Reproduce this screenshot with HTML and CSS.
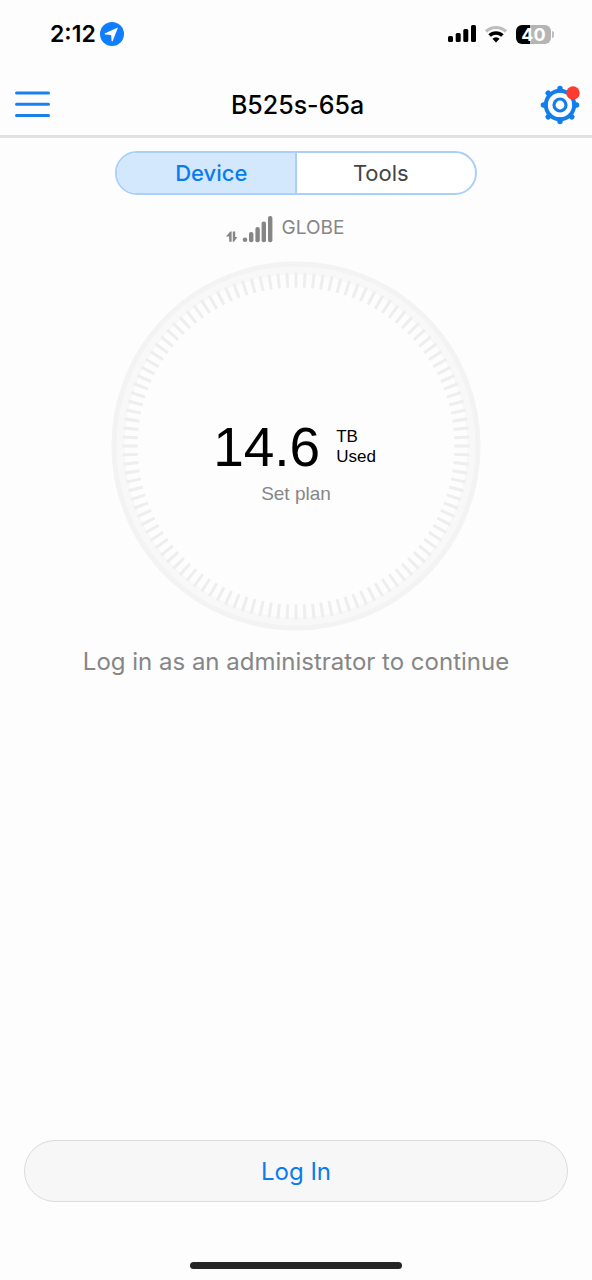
FILE: index.html
```html
<!DOCTYPE html>
<html lang="en">
<head>
<meta charset="utf-8">
<meta name="viewport" content="width=device-width, initial-scale=1">
<title>B525s-65a</title>
<link rel="stylesheet" href="styles.css">
</head>
<body>
<div class="statusbar">
  <div class="clock">
    <span>2:12</span>
    <svg width="24" height="24" viewBox="0 0 24 24" aria-hidden="true"><circle cx="12" cy="12" r="12" fill="#0f7dff"/><path d="M18 5.4 5 11.2q-.9.6.1 1.2l6 .5.5 6q.5 1 1.1.1Z" fill="#fff"/></svg>
  </div>
  <div class="indicators">
    <svg width="28" height="18" viewBox="0 0 28 18" aria-hidden="true"><rect x="0" y="11" width="5" height="6" rx="1.5"/><rect x="7.7" y="8" width="5" height="9" rx="1.5"/><rect x="15.3" y="4" width="5" height="13" rx="1.5"/><rect x="23" y="0" width="5" height="17" rx="1.5"/></svg>
    <svg width="24" height="18" viewBox="0 0 24 18" fill="none" aria-hidden="true"><path d="M2 6.5a14.5 14.5 0 0 1 20 0" stroke="#bdbdbd" stroke-width="3.2"/><path d="M5.6 10.6a9 9 0 0 1 12.8 0" stroke="#000" stroke-width="3.6"/><path d="M8.4 13.8a5 5 0 0 1 7.2 0L12 17.4Z" fill="#000"/></svg>
    <div class="battery"><span class="level">40</span><span class="nub"></span></div>
  </div>
</div>
<header class="header">
  <button class="icon-button" aria-label="Menu">
    <svg width="35" height="27" viewBox="0 0 35 27" stroke="#1a80ee" stroke-width="3" stroke-linecap="round" aria-hidden="true"><path d="M1.5 2h32M1.5 13.3h32M1.5 24.5h32"/></svg>
  </button>
  <h1 class="title">B525s-65a</h1>
  <button class="icon-button" aria-label="Settings">
    <svg width="40" height="40" viewBox="0 0 40 40" fill="none" aria-hidden="true">
      <g stroke="#147dec" stroke-linecap="round">
        <circle cx="20" cy="20" r="14.2" stroke-width="4"/><circle cx="20" cy="20" r="6" stroke-width="3.2"/>
        <path stroke-width="5.4" d="M20 5V3.4M20 35v1.6M5 20H3.4M35 20h1.6M9.4 9.4 8.2 8.2M30.6 30.6l1.2 1.2M9.4 30.6l-1.2 1.2M30.6 9.4l1.2-1.2"/>
      </g>
      <circle cx="33" cy="8" r="6.7" fill="#ff3b2f"/>
    </svg>
  </button>
</header>
<main class="main">
  <div class="tabs">
    <button class="tab tab-active" aria-pressed="true">Device</button>
    <button class="tab" aria-pressed="false">Tools</button>
  </div>
  <div class="network">
    <svg width="47" height="28" viewBox="0 0 47 28" fill="#868686" aria-hidden="true">
      <path d="M0 20.4 4.2 15.6h1.4v10.2H3.2v-5.4ZM6.8 15.6h2.4v5.4h2.2L8 25.8H6.8Z"/>
      <circle cx="19" cy="23.8" r="2.3"/><rect x="23" y="16" width="4.4" height="10.2" rx="2"/><rect x="29.4" y="11" width="4.4" height="15.2" rx="2"/><rect x="35.6" y="5.5" width="4.4" height="20.7" rx="2"/><rect x="42" y="0" width="4.4" height="26.2" rx="2"/>
    </svg>
    <span>GLOBE</span>
  </div>
  <section class="dial">
    <svg class="ring" viewBox="0 0 370 370" fill="none" aria-hidden="true">
      <circle cx="185" cy="185" r="178" stroke="#f8f8f8" stroke-width="13"/>
      <circle cx="185" cy="185" r="182" stroke="#f3f3f3" stroke-width="5"/>
      <circle cx="185" cy="185" r="166" stroke="#eeeeee" stroke-width="15" pathLength="1200" stroke-dasharray="3.5 6.5" stroke-dashoffset="1.75"/>
    </svg>
    <div class="usage">
      <span class="amount">14.6</span>
      <span class="unit">TB<br>Used</span>
    </div>
    <a class="plan" href="#">Set plan</a>
  </section>
  <p class="hint">Log in as an administrator to continue</p>
</main>
<footer class="footer">
  <button class="login">Log In</button>
  <div class="home"></div>
</footer>
</body>
</html>
```
FILE: styles.css
```css
* { box-sizing: border-box; }
body {
  margin: 0;
  min-height: 100vh;
  display: flex;
  flex-direction: column;
  background: #fdfdfd;
  color: #000;
  font-family: Inter, "Liberation Sans", sans-serif;
}
button { font: inherit; padding: 0; border: 0; background: none; cursor: pointer; }
svg { display: block; }
.statusbar {
  height: 72px;
  padding: 0 38px 4px 50px;
  display: flex;
  align-items: center;
  justify-content: space-between;
}
.clock { display: flex; align-items: center; gap: 4px; font-size: 23px; font-weight: 600; }
.indicators { display: flex; align-items: center; gap: 8px; }
.battery { display: flex; align-items: center; gap: 1px; }
.level {
  width: 35px;
  border-radius: 6px;
  background: linear-gradient(90deg, #000 40%, #b5b5b5 40%);
  color: #fff;
  font-size: 18px;
  line-height: 19px;
  font-weight: 700;
  text-align: center;
}
.nub { width: 2px; height: 7px; border-radius: 0 2px 2px 0; background: #bdbdbd; }
.header {
  height: 66px;
  padding: 2px 12px 0 15px;
  display: grid;
  grid-template-columns: 40px 1fr 40px;
  align-items: center;
  border-bottom: 3px solid #e1e1e1;
}
.title { margin: 0; text-align: center; font-size: 25px; font-weight: 500; }
.main { flex: 1; display: flex; flex-direction: column; align-items: center; padding-top: 13px; }
.tabs {
  width: 61%;
  height: 44px;
  display: flex;
  border: 2px solid #a9d0fa;
  border-radius: 22px;
  overflow: hidden;
  background: #fff;
}
.tab { flex: 1; padding-right: 10px; font-size: 22px; color: #444; }
.tab-active { padding: 0 0 0 10px; background: #d4e8fd; color: #087cf0; border-right: 2px solid #a9d0fa; font-weight: 500; }
.network {
  display: flex;
  gap: 9px;
  margin: 21px 22px 0 0;
  color: #868686;
  font-size: 19px;
  line-height: 24px;
}
.dial {
  width: 370px;
  max-width: 90%;
  aspect-ratio: 1;
  margin-top: 17px;
  display: grid;
  grid-template-rows: 1fr auto auto 1fr;
  justify-items: center;
  font-family: "Liberation Sans", Arial, sans-serif;
}
.ring { grid-area: 1 / 1 / 5 / 2; width: 100%; }
.usage { grid-area: 2 / 1; display: flex; align-items: center; gap: 16px; padding: 32px 3px 0 0; }
.amount { font-size: 55px; line-height: 56px; }
.unit { font-size: 17px; line-height: 20px; }
.plan { grid-area: 3 / 1; color: #868686; font-size: 19px; line-height: 22px; padding-top: 8px; text-decoration: none; }
.hint { margin: 16px 0 0; color: #868686; font-size: 24px; line-height: 30px; }
.footer { padding: 0 24px 11px; display: flex; flex-direction: column; align-items: center; gap: 60px; }
.login {
  width: 100%;
  height: 62px;
  border: 1px solid #dcdcdc;
  border-radius: 31px;
  background: #f7f7f7;
  color: #087cf0;
  font-size: 24px;
}
.home { width: 212px; height: 7px; border-radius: 4px; background: #252525; }
```
